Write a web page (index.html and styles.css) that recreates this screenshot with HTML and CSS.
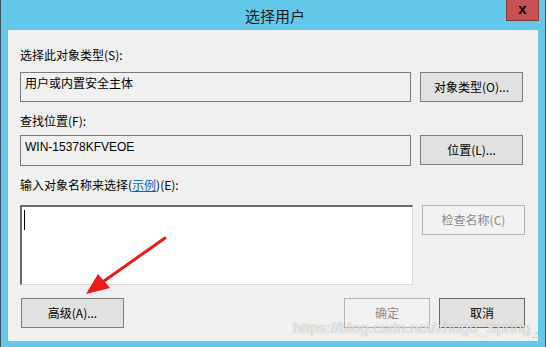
FILE: index.html
```html
<html>
<head>
<title>选择用户</title>
<link rel="stylesheet" href="styles.css">
</head>
<body>
<div class="window">
	<div class="titlebar">
		<span class="title">选择用户</span>
		<div class="close">x</div>
	</div>
	<div class="panel">
		<div class="label l1">选择此对象类型(S):</div>
		<div class="row r1">
			<div class="field">用户或内置安全主体</div>
			<div class="btn wide">对象类型(O)...</div>
		</div>
		<div class="label l2">查找位置(F):</div>
		<div class="row r2">
			<div class="field">WIN-15378KFVEOE</div>
			<div class="btn wide">位置(L)...</div>
		</div>
		<div class="label l3">输入对象名称来选择(<a class="link">示例</a>)(E):</div>
		<div class="row r3">
			<div class="names"><span class="caret"></span></div>
			<div class="btn wide off">检查名称(C)</div>
		</div>
		<div class="footer">
			<div class="btn wide adv">高级(A)...</div>
			<div class="spacer"></div>
			<div class="btn small off">确定</div>
			<div class="btn small dark">取消</div>
		</div>
	</div>
	<svg class="arrow" width="546" height="347" viewBox="0 0 546 347">
		<line x1="164" y1="238" x2="96" y2="286" stroke="#ec1c1c" stroke-width="3" stroke-linecap="round"/>
		<polygon points="85,294 97,274 109,288" fill="#ec1c1c"/>
	</svg>
	<div class="watermark">https://blog.csdn.net/zhugo_Spring</div>
	<div class="grip">.:</div>
</div>
</body>
</html>
```

FILE: styles.css
```css
body {
	margin: 0;
	font-family: "Noto Sans CJK SC", "Liberation Sans", sans-serif;
	font-size: 12px;
	color: #000;
}
.window {
	position: relative;
	width: 544px;
	height: 347px;
	background-color: #63c8e9;
	border-left: 1px solid #3a5361;
	border-right: 1px solid #3a5361;
	overflow: hidden;
}
.titlebar {
	position: relative;
	height: 30px;
	display: flex;
	justify-content: center;
	align-items: center;
}
.title {
	font-size: 15px;
	color: #1b1b1b;
	margin-top: 1px;
	margin-left: 4px;
}
.close {
	position: absolute;
	top: 0;
	right: 6px;
	width: 31px;
	height: 20px;
	background-color: #c75050;
	border: 1px solid #8a3838;
	border-top: 0;
	font-family: "Liberation Sans", sans-serif;
	font-weight: bold;
	font-size: 15px;
	line-height: 17px;
	text-align: center;
}
.panel {
	margin: 0 7px;
	height: 311px;
	background-color: #f0f0f0;
	padding: 0 13px 0 12px;
	display: flex;
	flex-direction: column;
}
.label {
	height: 16px;
	line-height: 16px;
}
.l1 { margin-top: 17px; }
.l2 { margin-top: 11px; }
.l3 { margin-top: 11px; }
.link {
	color: #0066cc;
	text-decoration: underline;
}
.row {
	display: flex;
	gap: 9px;
	align-items: flex-start;
}
.r1 { margin-top: 9px; height: 30px; }
.r2 { margin-top: 6px; height: 31px; }
.r3 { margin-top: 12px; height: 80px; }
.field {
	width: 391px;
	height: 100%;
	box-sizing: border-box;
	border: 1px solid #7a7a7a;
	padding: 3px 0 0 4px;
	line-height: 16px;
	font-family: "Liberation Sans", "Noto Sans CJK SC", sans-serif;
}
.names {
	width: 393px;
	height: 80px;
	box-sizing: border-box;
	background-color: #fff;
	border: 1px solid #dadada;
	border-top: 2px solid #6a6a6a;
	border-left: 2px solid #6a6a6a;
	padding: 3px 0 0 2px;
}
.caret {
	display: block;
	width: 1px;
	height: 20px;
	background-color: #000;
}
.btn {
	box-sizing: border-box;
	height: 30px;
	line-height: 28px;
	text-align: center;
	background-color: #e1e1e1;
	border: 1px solid #7d7d7d;
}
.wide { width: 103px; }
.small { width: 86px; }
.adv { margin-left: 1px; }
.dark { border-color: #6a6a6a; }
.off {
	background-color: #f2f2f2;
	border-color: #b4b4b4;
	color: #8a8a8a;
}
.footer {
	margin-top: 13px;
	display: flex;
	gap: 9px;
}
.spacer { flex: 1; }
.arrow {
	position: absolute;
	left: 0;
	top: 0;
}
.watermark {
	position: absolute;
	left: 292px;
	top: 319px;
	white-space: nowrap;
	font-family: "Liberation Sans", sans-serif;
	font-size: 15px;
	letter-spacing: 0.2px;
	color: rgba(255, 255, 255, 0.85);
	text-shadow: 0 0 1px rgba(0, 0, 0, 0.45);
}
.grip {
	position: absolute;
	left: 531px;
	top: 326px;
	font-size: 10px;
	color: #a0a0a0;
}
```
